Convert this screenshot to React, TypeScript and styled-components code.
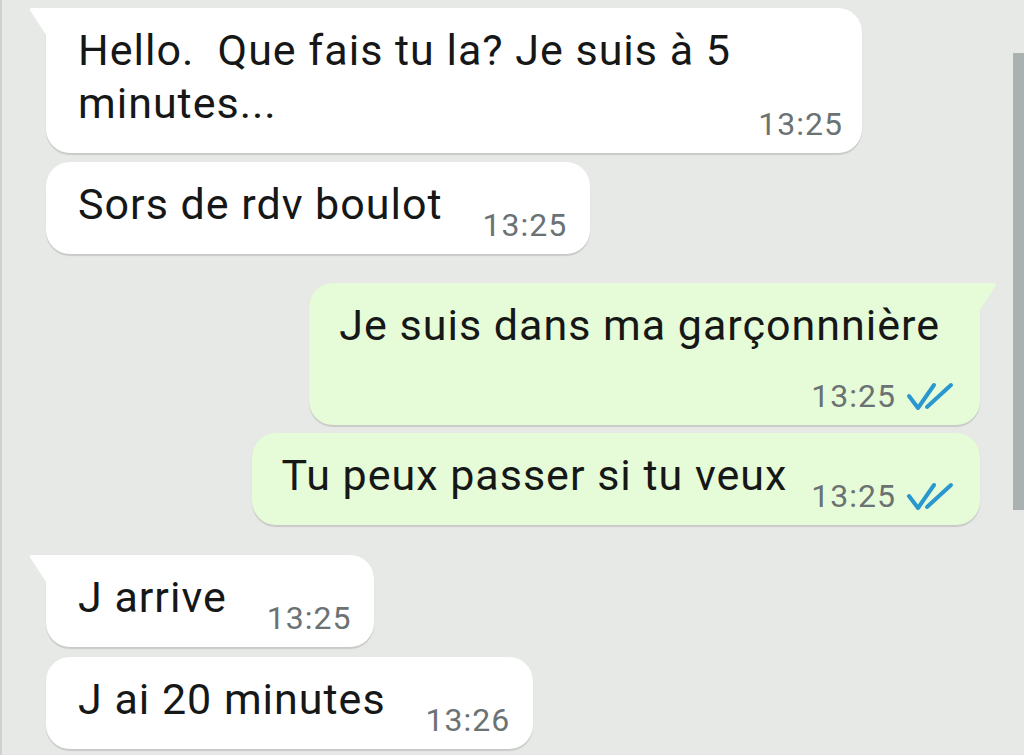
import React from "react";
import styled, { createGlobalStyle, css } from "styled-components";

const Global = createGlobalStyle`
  html, body {
    margin: 0;
    padding: 0;
    background: #e6e9e5;
  }
  body {
    font-family: Roboto, "Noto Sans", "Liberation Sans", sans-serif;
    -webkit-font-smoothing: antialiased;
  }
`;

const Screen = styled.div`
  position: relative;
  width: 1024px;
  height: 755px;
  overflow: hidden;
  background: #e6e9e5;
  border-left: 2px solid #cfd3d0;
  box-sizing: border-box;
`;

const List = styled.div`
  display: flex;
  flex-direction: column;
  padding: 8px 44px 0 44px;
`;

const Row = styled.div<{ $out?: boolean; $gap: number }>`
  display: flex;
  justify-content: ${(p) => (p.$out ? "flex-end" : "flex-start")};
  margin-top: ${(p) => p.$gap}px;
`;

type Layout = "inline" | "below" | "overlay";

const OUT_BG = "#e6fbd8";

const Bubble = styled.div<{ $out?: boolean; $tail?: boolean; $layout: Layout; $width?: number }>`
  position: relative;
  box-sizing: border-box;
  background: ${(p) => (p.$out ? OUT_BG : "#ffffff")};
  border-radius: 24px;
  box-shadow: 0 1.5px 1px rgba(0, 0, 0, 0.13);
  display: flex;
  flex-direction: ${(p) => (p.$layout === "inline" ? "row" : "column")};
  align-items: ${(p) => (p.$layout === "inline" ? "flex-end" : "stretch")};
  padding-top: 16px;
  padding-bottom: ${(p) => (p.$layout === "inline" ? 23 : 11)}px;
  padding-left: ${(p) => (p.$out ? 30 : 32)}px;
  padding-right: ${(p) => (p.$out ? 26 : p.$layout === "overlay" ? 19 : 23)}px;
  ${(p) => p.$width && css`width: ${p.$width}px;`}
  ${(p) =>
    p.$tail &&
    (p.$out
      ? css`border-top-right-radius: 0;`
      : css`border-top-left-radius: 0;`)}
`;

const Text = styled.div<{ $pr?: number }>`
  font-size: 43px;
  line-height: 53px;
  letter-spacing: 1px;
  color: #161717;
  white-space: pre-wrap;
  padding-right: ${(p) => p.$pr ?? 0}px;
`;

const Meta = styled.div<{ $layout: Layout; $out?: boolean }>`
  display: flex;
  align-items: center;
  justify-content: flex-end;
  gap: 10px;
  font-size: 32px;
  line-height: 36px;
  letter-spacing: 1px;
  color: #6b7274;
  ${(p) =>
    p.$layout === "inline"
      ? css`
          margin-left: ${p.$out ? 24 : 40}px;
          margin-bottom: -12px;
        `
      : p.$layout === "overlay"
      ? css`margin-top: -24px;`
      : css`margin-top: 26px;`}
`;

const Tail = styled.svg<{ $out?: boolean }>`
  position: absolute;
  top: 0;
  width: 20px;
  height: 30px;
  ${(p) => (p.$out ? css`right: -18px;` : css`left: -18px;`)}
`;

const Scrollbar = styled.div`
  position: absolute;
  right: 0;
  top: 53px;
  width: 11px;
  height: 457px;
  background: #a9b1b1;
`;

const TickIcon = styled.svg`
  display: block;
  width: 48px;
  height: 30px;
`;

const Ticks = () => (
  <TickIcon viewBox="0 0 48 30">
    <g fill="none" stroke="#2a97cf" strokeWidth="4" strokeLinecap="round" strokeLinejoin="round">
      <path d="M3 15 L12 27 L28 4" />
      <path d="M21 26 L45 4" />
    </g>
  </TickIcon>
);

type Msg = {
  text: string;
  time: string;
  out?: boolean;
  tail?: boolean;
  layout: Layout;
  width?: number;
  pr?: number;
  gap: number;
};

const messages: Msg[] = [
  { text: "Hello.  Que fais tu la? Je suis à 5\nminutes...", time: "13:25", tail: true, layout: "overlay", width: 816, gap: 0 },
  { text: "Sors de rdv boulot", time: "13:25", layout: "inline", gap: 9 },
  { text: "Je suis dans ma garçonnnière", time: "13:25", out: true, tail: true, layout: "below", pr: 14, gap: 29 },
  { text: "Tu peux passer si tu veux", time: "13:25", out: true, layout: "inline", gap: 8 },
  { text: "J arrive", time: "13:25", tail: true, layout: "inline", gap: 30 },
  { text: "J ai 20 minutes", time: "13:26", layout: "inline", gap: 10 },
];

export default function App() {
  return (
    <>
      <Global />
      <Screen>
        <List>
          {messages.map((m, i) => (
            <Row key={i} $out={m.out} $gap={m.gap}>
              <Bubble $out={m.out} $tail={m.tail} $layout={m.layout} $width={m.width}>
                {m.tail && (
                  <Tail $out={m.out} viewBox="0 0 20 30">
                    {m.out ? (
                      <path d="M0 0 H16 Q19.5 0 17.5 3 L0 30 Z" fill={OUT_BG} />
                    ) : (
                      <path d="M20 0 H4 Q0.5 0 2.5 3 L20 30 Z" fill="#ffffff" />
                    )}
                  </Tail>
                )}
                <Text $pr={m.pr}>{m.text}</Text>
                <Meta $layout={m.layout} $out={m.out}>
                  <span>{m.time}</span>
                  {m.out && <Ticks />}
                </Meta>
              </Bubble>
            </Row>
          ))}
        </List>
        <Scrollbar />
      </Screen>
    </>
  );
}
